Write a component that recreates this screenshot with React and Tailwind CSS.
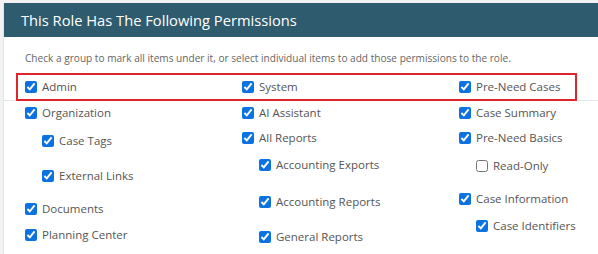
import { useState } from "react";

const columns = [
  [
    { label: "Organization", checked: true },
    { label: "Case Tags", checked: true, sub: true, mt: "mt-[4px]" },
    { label: "External Links", checked: true, sub: true, mt: "mt-[11px]" },
    { label: "Documents", checked: true, mt: "mt-[9px]" },
    { label: "Planning Center", checked: true, mt: "mt-[2px]" },
  ],
  [
    { label: "AI Assistant", checked: true },
    { label: "All Reports", checked: true, mt: "mt-[1px]" },
    { label: "Accounting Exports", checked: true, sub: true, mt: "mt-[3px]" },
    { label: "Accounting Reports", checked: true, sub: true, mt: "mt-[13px]" },
    { label: "General Reports", checked: true, sub: true, mt: "mt-[11px]" },
  ],
  [
    { label: "Case Summary", checked: true },
    { label: "Pre-Need Basics", checked: true, mt: "mt-[1px]" },
    { label: "Read-Only", checked: false, sub: true, mt: "mt-[4px]" },
    { label: "Case Information", checked: true, mt: "mt-[9px]" },
    { label: "Case Identifiers", checked: true, sub: true, mt: "mt-[3px]" },
  ],
];

function Item({ label, checked, sub, mt }) {
  const [on, setOn] = useState(checked);
  return (
    <label
      className={`flex h-[24px] items-center gap-[5px] ${sub ? "pl-[17px]" : ""} ${mt || ""}`}
    >
      <input
        type="checkbox"
        checked={on}
        onChange={() => setOn(!on)}
        className="m-0 h-[12px] w-[12px] accent-[#0b72e0]"
      />
      <span>{label}</span>
    </label>
  );
}

export default function App() {
  return (
    <div
      className="h-[254px] w-[598px] overflow-hidden bg-[#f2f2f2] pl-[3px] pt-[3px] text-[11.5px] text-[#555]"
      style={{ fontFamily: '"Open Sans", sans-serif' }}
    >
      <div className="h-[300px] border-l border-[#e3e3e3] bg-white">
        {/* Header */}
        <div className="flex h-[34px] items-center bg-[#2f5b6f] pl-[17px] text-[14.7px] text-white">
          This Role Has The Following Permissions
        </div>

        <div className="pl-[21px] pt-[14px]">
          <p className="text-[10.1px] leading-[14px] text-[#666]">
            Check a group to mark all items under it, or select individual
            items to add those permissions to the role.
          </p>

          {/* Top level groups */}
          <div className="mt-[8px] -ml-[22px] border-b border-[#e6e6e6] pl-[13px]">
            <div className="relative -mb-[1px] w-[561px] border-2 border-[#e0242b] pl-[7px]">
              <div className="grid grid-cols-[217px_217px_217px]">
                <Item label="Admin" checked />
                <Item label="System" checked />
                <Item label="Pre-Need Cases" checked />
              </div>
            </div>
          </div>

          <div className="grid grid-cols-[217px_217px_217px]">
            {columns.map((col, i) => (
              <div key={i} className="flex flex-col">
                {col.map((item) => (
                  <Item key={item.label} {...item} />
                ))}
              </div>
            ))}
          </div>
        </div>
      </div>
    </div>
  );
}
